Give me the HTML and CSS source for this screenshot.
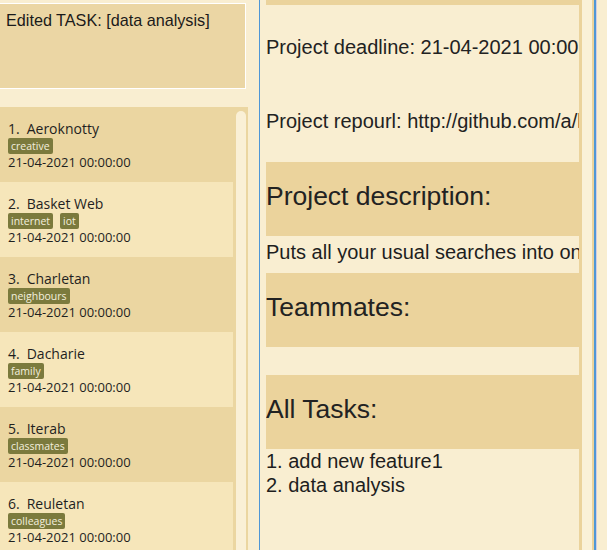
FILE: index.html
```html
<!DOCTYPE html>
<html>
<head>
<meta charset="utf-8">
<link rel="stylesheet" href="styles.css">
</head>
<body>
<div class="app">
  <div class="left">
    <div class="result">Edited TASK: [data analysis]</div>
    <div class="list">
      <div class="items">
        <div class="item odd">
          <div class="title"><span class="idx">1.</span>Aeroknotty</div>
          <div class="tags"><span class="tag">creative</span></div>
          <div class="date">21-04-2021 00:00:00</div>
        </div>
        <div class="item even">
          <div class="title"><span class="idx">2.</span>Basket Web</div>
          <div class="tags"><span class="tag">internet</span><span class="tag">iot</span></div>
          <div class="date">21-04-2021 00:00:00</div>
        </div>
        <div class="item odd">
          <div class="title"><span class="idx">3.</span>Charletan</div>
          <div class="tags"><span class="tag">neighbours</span></div>
          <div class="date">21-04-2021 00:00:00</div>
        </div>
        <div class="item even">
          <div class="title"><span class="idx">4.</span>Dacharie</div>
          <div class="tags"><span class="tag">family</span></div>
          <div class="date">21-04-2021 00:00:00</div>
        </div>
        <div class="item odd">
          <div class="title"><span class="idx">5.</span>Iterab</div>
          <div class="tags"><span class="tag">classmates</span></div>
          <div class="date">21-04-2021 00:00:00</div>
        </div>
        <div class="item even">
          <div class="title"><span class="idx">6.</span>Reuletan</div>
          <div class="tags"><span class="tag">colleagues</span></div>
          <div class="date">21-04-2021 00:00:00</div>
        </div>
      </div>
      <div class="scrollbar"></div>
    </div>
  </div>
  <div class="divider"></div>
  <div class="right">
    <div class="content">
      <div class="head-top"></div>
      <div class="field deadline">Project deadline: 21-04-2021 00:00:00</div>
      <div class="field repo">Project repourl: http://github.com/a/basketweb</div>
      <div class="heading">Project description:</div>
      <div class="desc">Puts all your usual searches into one place</div>
      <div class="heading">Teammates:</div>
      <div class="empty"></div>
      <div class="heading">All Tasks:</div>
      <div class="tasks">
        <div class="task">1. add new feature1</div>
        <div class="task">2. data analysis</div>
      </div>
    </div>
    <div class="edge-tan"></div>
    <div class="edge-gap"></div>
    <div class="edge-tan2"></div>
    <div class="edge-blue"></div>
    <div class="edge-lav"></div>
    <div class="edge-fill"></div>
  </div>
</div>
</body>
</html>
```

FILE: styles.css
```css
html, body {
  margin: 0;
  padding: 0;
}
body {
  width: 607px;
  height: 550px;
  overflow: hidden;
  background: #f9eed1;
}
.app {
  display: flex;
  width: 607px;
  height: 550px;
}
.left {
  width: 248px;
  flex: none;
  display: flex;
  flex-direction: column;
}
.result {
  margin-top: 3px;
  width: 246px;
  height: 86px;
  box-sizing: border-box;
  border: 1px solid #ffffff;
  border-left: none;
  background: #ebd6a4;
  padding: 7px 6px;
  font-family: "Liberation Sans", Arial, sans-serif;
  font-size: 16.2px;
  line-height: 18px;
  color: #1a1a1a;
}
.list {
  margin-top: 18px;
  flex: 1;
  display: flex;
  background: #ebd6a1;
  overflow: hidden;
}
.items {
  width: 233px;
  flex: none;
}
.item {
  height: 75px;
  box-sizing: border-box;
  padding: 13px 8px 0;
  font-family: "Open Sans", sans-serif;
  color: #1f1f1f;
}
.odd { background: #ebd6a1; }
.even { background: #f6e6ba; }
.title {
  font-size: 14px;
  line-height: 18px;
}
.idx {
  margin-right: 7px;
}
.tags {
  display: flex;
  gap: 7px;
}
.tag {
  background: #7b7a3d;
  color: #f3efdd;
  font-size: 10.5px;
  line-height: 14px;
  padding: 1px 3px;
  border-radius: 2px;
}
.date {
  font-size: 13px;
  line-height: 17px;
}
.scrollbar {
  margin: 4px 0 0 3px;
  width: 10px;
  height: 600px;
  background: #faf0d6;
  border-radius: 5px;
}
.divider {
  width: 11px;
  flex: none;
}
.right {
  width: 348px;
  flex: none;
  display: flex;
  box-sizing: border-box;
  border-left: 1px solid #4f97d6;
}
.content {
  width: 313px;
  flex: none;
  margin-left: 6px;
  overflow: hidden;
  white-space: nowrap;
  font-family: "Liberation Sans", Arial, sans-serif;
  color: #1e1e1e;
}
.head-top {
  height: 5px;
  background: #ebd39c;
}
.field {
  font-size: 20px;
  line-height: 23px;
  color: #222;
}
.deadline { margin-top: 31px; }
.repo { margin-top: 51px; }
.heading {
  height: 74px;
  box-sizing: border-box;
  background: #ebd39c;
  font-size: 26.5px;
  line-height: 30px;
  padding-top: 19px;
  color: #222;
}
.repo + .heading { margin-top: 29px; }
.desc {
  font-size: 20px;
  line-height: 23px;
  padding: 5px 0 9px;
}
.empty {
  height: 28px;
}
.tasks {
  font-size: 20px;
  line-height: 24px;
}
.edge-tan { width: 3px; background: #ebd39c; flex: none; }
.edge-gap { width: 10px; flex: none; background: #faf1d8; }
.edge-tan2 { width: 2px; background: #ebd39c; flex: none; }
.edge-blue { width: 2px; background: #4f97d6; flex: none; }
.edge-lav { width: 1px; background: #cfcde6; flex: none; }
.edge-fill { flex: 1; background: #f9eed1; }
```
